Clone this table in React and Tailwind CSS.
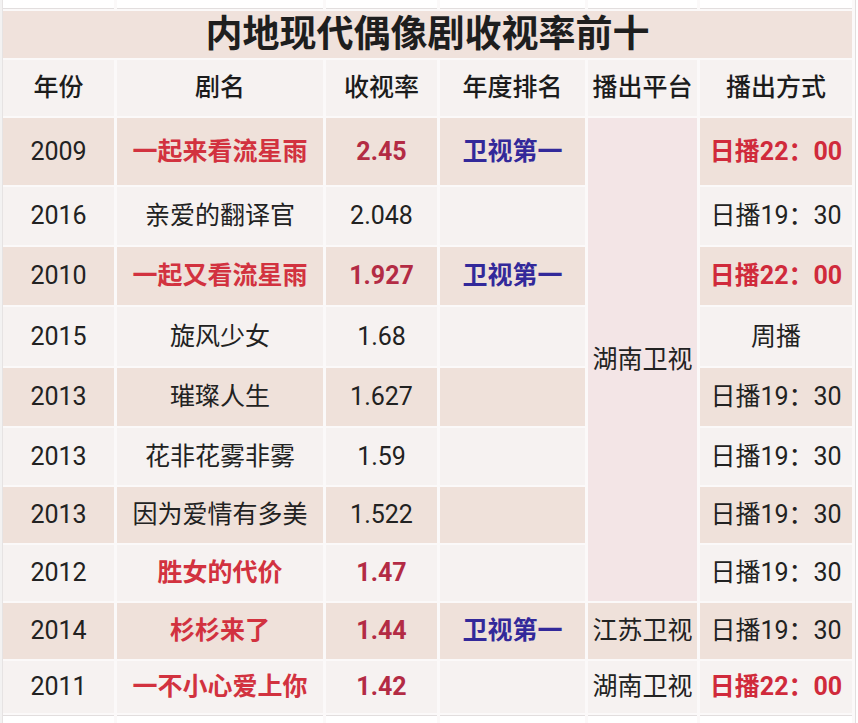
const rows = [
  { year: "2009", name: "一起来看流星雨", rate: "2.45", rank: "卫视第一", time: "日播22：00", hot: true, shade: true },
  { year: "2016", name: "亲爱的翻译官", rate: "2.048", rank: "", time: "日播19：30" },
  { year: "2010", name: "一起又看流星雨", rate: "1.927", rank: "卫视第一", time: "日播22：00", hot: true, shade: true },
  { year: "2015", name: "旋风少女", rate: "1.68", rank: "", time: "周播" },
  { year: "2013", name: "璀璨人生", rate: "1.627", rank: "", time: "日播19：30", shade: true },
  { year: "2013", name: "花非花雾非雾", rate: "1.59", rank: "", time: "日播19：30" },
  { year: "2013", name: "因为爱情有多美", rate: "1.522", rank: "", time: "日播19：30", shade: true },
  { year: "2012", name: "胜女的代价", rate: "1.47", rank: "", time: "日播19：30", red: true },
  { year: "2014", name: "杉杉来了", rate: "1.44", rank: "卫视第一", time: "日播19：30", red: true, shade: true, platform: "江苏卫视" },
  { year: "2011", name: "一不小心爱上你", rate: "1.42", rank: "", time: "日播22：00", red: true, hot: true, platform: "湖南卫视" },
];

const heights = ["h-[67px]", "h-[58px]", "h-[58px]", "h-[59px]", "h-[58px]", "h-[57px]", "h-[56px]", "h-[56px]", "h-[56px]", "h-[52px]"];

function Cell({ className = "", children }) {
  return <div className={`flex items-center justify-center text-[25px] ${className}`}>{children}</div>;
}

export default function App() {
  return (
    <div
      className="w-[858px] h-[723px] overflow-hidden bg-[#fbf9f9] text-[#222] flex"
      style={{ fontFamily: 'Roboto, "Noto Sans CJK SC", "Noto Sans", sans-serif' }}
    >
      <div className="w-[3px] border-r border-[#e6e3e3] bg-[#f3f2f2]" />
      <div className="w-[852px] grid grid-cols-[111px_206px_111px_145px_109px_152px] gap-x-[3px] gap-y-[2px] grid-rows-[9px_47px_56px_67px_58px_58px_59px_58px_57px_56px_56px_56px_52px_8px]">
        {/* top strip of empty sheet cells */}
        {[0, 1, 2, 3, 4, 5].map((i) => (
          <div key={i} className="bg-white border-b border-[#e2dede]" />
        ))}

        <div className="col-span-6 bg-[#f0e2dc] flex items-center justify-center text-[37px] font-bold leading-none text-[#1e1e1e]">
          内地现代偶像剧收视率前十
        </div>

        {["年份", "剧名", "收视率", "年度排名", "播出平台", "播出方式"].map((h) => (
          <Cell key={h} className="bg-[#f6f2f1] font-medium text-[#1c1c1c]">
            {h}
          </Cell>
        ))}

        {rows.map((r, i) => {
          const bg = r.shade ? "bg-[#efe1da]" : "bg-[#f6f2f1]";
          return [
            <Cell key={`y${i}`} className={`${bg} ${heights[i]}`}>{r.year}</Cell>,
            <Cell key={`n${i}`} className={`${bg} ${r.hot || r.red ? "text-[#d2323f] font-bold" : ""}`}>
              {r.name}
            </Cell>,
            <Cell key={`r${i}`} className={`${bg} ${r.hot || r.red ? "text-[#b32b44] font-bold" : ""}`}>
              {r.rate}
            </Cell>,
            <Cell key={`k${i}`} className={`${bg} font-bold text-[#33299a]`}>{r.rank}</Cell>,
            i === 0 ? (
              <Cell key="merged" className="row-span-8 bg-[#f3e5e6]">湖南卫视</Cell>
            ) : r.platform ? (
              <Cell key={`p${i}`} className={bg}>{r.platform}</Cell>
            ) : null,
            <Cell key={`t${i}`} className={`${bg} ${r.hot ? "text-[#d02a3b] font-bold" : ""}`}>
              {r.time}
            </Cell>,
          ];
        })}

        {[0, 1, 2, 3, 4, 5].map((i) => (
          <div key={`b${i}`} className="bg-white border-t border-[#e2dede]" />
        ))}
      </div>
      <div className="w-[3px] bg-white border-l border-[#e2dede]" />
    </div>
  );
}
